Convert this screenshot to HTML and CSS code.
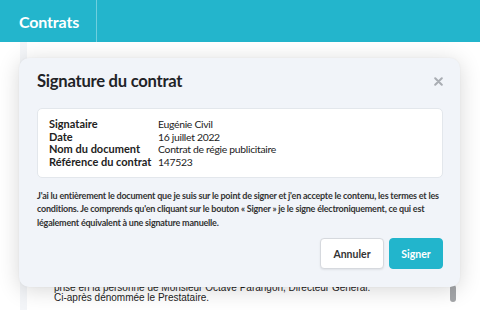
FILE: index.html
```html
<!DOCTYPE html>
<html lang="fr">
<head>
<meta charset="utf-8">
<title>Contrats</title>
<link rel="stylesheet" href="styles.css">
</head>
<body>
<header class="topbar">
  <div class="brand">Contrats</div>
  <div class="topbar-rest"></div>
</header>
<main class="workspace">
  <div class="gutter"></div>
  <section class="doc">
    <div class="doc-text">
      <p>prise en la personne de Monsieur Octave Parangon, Directeur Général.</p>
      <p>Ci-après dénommée le Prestataire.</p>
    </div>
    <div class="scroll-track"><div class="scroll-thumb"></div></div>
  </section>
</main>

<div class="modal" role="dialog" aria-labelledby="modal-title">
  <div class="modal-head">
    <h2 id="modal-title" class="modal-title">Signature du contrat</h2>
    <button class="close" aria-label="Fermer">
      <svg width="9" height="9" viewBox="0 0 9 9"><path d="M1.2 1.2 L7.8 7.8 M7.8 1.2 L1.2 7.8" stroke="#a9adb3" stroke-width="2" stroke-linecap="round"/></svg>
    </button>
  </div>
  <div class="details">
    <div class="label">Signataire</div><div class="value">Eugénie Civil</div>
    <div class="label">Date</div><div class="value">16 juillet 2022</div>
    <div class="label">Nom du document</div><div class="value">Contrat de régie publicitaire</div>
    <div class="label">Référence du contrat</div><div class="value">147523</div>
  </div>
  <p class="consent">J'ai lu entièrement le document que je suis sur le point de signer et j'en accepte le contenu, les termes et les conditions. Je comprends qu'en cliquant sur le bouton « Signer » je le signe électroniquement, ce qui est légalement équivalent à une signature manuelle.</p>
  <div class="actions">
    <button class="btn btn-cancel">Annuler</button>
    <button class="btn btn-sign">Signer</button>
  </div>
</div>
</body>
</html>
```

FILE: styles.css
```css
* { box-sizing: border-box; }

html, body {
  margin: 0;
  height: 310px;
  overflow: hidden;
  background: #ffffff;
  font-family: Lato, "Open Sans", sans-serif;
  color: #222;
}

.topbar {
  height: 42px;
  background: #23b5cc;
  display: flex;
}

.brand {
  width: 97px;
  border-right: 1px solid rgba(255, 255, 255, 0.35);
  color: #fff;
  font-weight: 700;
  font-size: 16px;
  letter-spacing: -0.15px;
  display: flex;
  align-items: center;
  padding-left: 19px;
}

.topbar-rest { flex: 1; }

.workspace {
  display: flex;
  height: 268px;
  padding-right: 20px;
}

.gutter {
  width: 27px;
  background: linear-gradient(to right, #ffffff 20px, #f3f5f8 20px);
}

.doc {
  flex: 1;
  display: flex;
  background: #fff;
  overflow: hidden;
}

.doc-text {
  flex: 1;
  padding: 241px 0 0 27px;
  font-family: "Liberation Sans", Arial, sans-serif;
  font-size: 10px;
  line-height: 10px;
  color: #222;
}

.doc-text p { margin: 0; white-space: nowrap; }

.scroll-track {
  width: 13px;
  display: flex;
  flex-direction: column;
  padding: 243px 4px 0 3px;
}

.scroll-thumb {
  height: 17px;
  border-radius: 3px;
  background: #a4a6a9;
}

.modal {
  position: absolute;
  left: 19px;
  top: 58px;
  width: 441px;
  height: 229px;
  background: #f1f4f9;
  border-radius: 10px;
  box-shadow: 0 3px 22px rgba(0, 0, 0, 0.16), 0 0 2px rgba(0, 0, 0, 0.05);
  padding: 11px 17px 18px 18px;
  display: flex;
  flex-direction: column;
}

.modal-head {
  display: flex;
  align-items: center;
  justify-content: space-between;
  height: 24px;
}

.modal-title {
  margin: 0;
  font-size: 16.6px;
  letter-spacing: -0.25px;
  font-weight: 700;
  color: #1f2327;
}

.close {
  border: 0;
  background: none;
  padding: 0;
  width: 9px;
  height: 9px;
  display: flex;
}

.details {
  margin-top: 15px;
  background: #fff;
  border: 1px solid #e3e7ec;
  border-radius: 5px;
  height: 70px;
  padding: 9px 11px;
  display: grid;
  grid-template-columns: 109px 1fr;
  font-size: 11px;
  line-height: 12.4px;
  color: #222;
}

.label { font-weight: 700; }

.value {
  font-size: 10.4px;
  letter-spacing: -0.3px;
}

.consent {
  margin: 11px 0 0;
  font-size: 9px;
  letter-spacing: -0.22px;
  line-height: 13.4px;
  font-weight: 700;
  color: #333;
}

.actions {
  margin-top: auto;
  display: flex;
  justify-content: flex-end;
  gap: 5px;
}

.btn {
  height: 31px;
  border-radius: 4px;
  font-family: inherit;
  font-size: 10.5px;
  font-weight: 700;
  padding: 0;
}

.btn-cancel {
  width: 64px;
  background: #fff;
  border: 1px solid #d6d9de;
  color: #333;
  box-shadow: 0 1px 2px rgba(0, 0, 0, 0.08);
}

.btn-sign {
  width: 54px;
  background: #22b5cc;
  border: 1px solid #22b5cc;
  color: #fff;
}
```
